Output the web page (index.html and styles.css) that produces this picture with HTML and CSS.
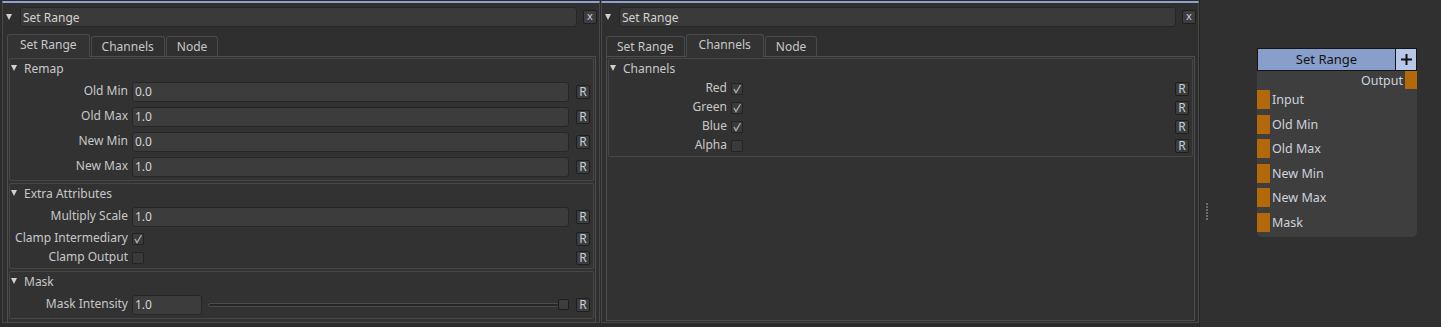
FILE: index.html
```html
<!DOCTYPE html>
<html lang="en">
<head>
  <meta charset="UTF-8">
  <title>Set Range</title>
  <link rel="stylesheet" href="styles.css">
</head>
<body>
  <div class="dock">
    <div class="frame">
      <div class="title-row">
        <span class="caret"></span>
        <div class="title-field">Set Range</div>
        <span class="close">x</span>
      </div>
      <div class="tabs">
        <span class="tab active">Set Range</span>
        <span class="tab">Channels</span>
        <span class="tab">Node</span>
      </div>
      <div class="tab-body">
        <div class="group">
          <div class="group-head"><span class="caret"></span>Remap</div>
          <div class="row"><span class="lbl">Old Min</span><div class="field">0.0</div><span class="r">R</span></div>
          <div class="row"><span class="lbl">Old Max</span><div class="field">1.0</div><span class="r">R</span></div>
          <div class="row"><span class="lbl">New Min</span><div class="field">0.0</div><span class="r">R</span></div>
          <div class="row"><span class="lbl">New Max</span><div class="field">1.0</div><span class="r">R</span></div>
        </div>
        <div class="group">
          <div class="group-head"><span class="caret"></span>Extra Attributes</div>
          <div class="row"><span class="lbl">Multiply Scale</span><div class="field">1.0</div><span class="r">R</span></div>
          <div class="row cb">
            <span class="lbl">Clamp Intermediary</span>
            <span class="check"><svg width="10" height="10" viewBox="0 0 10 10"><path d="M2 5 L4 8.5 L8.5 1" fill="none" stroke="#a8a8a8" stroke-width="1.4"/></svg></span>
            <span class="fill"></span><span class="r">R</span>
          </div>
          <div class="row cb">
            <span class="lbl">Clamp Output</span>
            <span class="check"></span>
            <span class="fill"></span><span class="r">R</span>
          </div>
        </div>
        <div class="group">
          <div class="group-head"><span class="caret"></span>Mask</div>
          <div class="row">
            <span class="lbl">Mask Intensity</span>
            <div class="field short">1.0</div>
            <div class="slider"><span class="track"></span><span class="handle"></span></div>
            <span class="r">R</span>
          </div>
        </div>
      </div>
    </div>
  </div>

  <div class="dock second">
    <div class="frame">
      <div class="title-row">
        <span class="caret"></span>
        <div class="title-field">Set Range</div>
        <span class="close">x</span>
      </div>
      <div class="tabs">
        <span class="tab">Set Range</span>
        <span class="tab active">Channels</span>
        <span class="tab">Node</span>
      </div>
      <div class="tab-body">
        <div class="group">
          <div class="group-head"><span class="caret"></span>Channels</div>
          <div class="row cb">
            <span class="lbl">Red</span>
            <span class="check"><svg width="10" height="10" viewBox="0 0 10 10"><path d="M2 5 L4 8.5 L8.5 1" fill="none" stroke="#a8a8a8" stroke-width="1.4"/></svg></span>
            <span class="fill"></span><span class="r">R</span>
          </div>
          <div class="row cb">
            <span class="lbl">Green</span>
            <span class="check"><svg width="10" height="10" viewBox="0 0 10 10"><path d="M2 5 L4 8.5 L8.5 1" fill="none" stroke="#a8a8a8" stroke-width="1.4"/></svg></span>
            <span class="fill"></span><span class="r">R</span>
          </div>
          <div class="row cb">
            <span class="lbl">Blue</span>
            <span class="check"><svg width="10" height="10" viewBox="0 0 10 10"><path d="M2 5 L4 8.5 L8.5 1" fill="none" stroke="#a8a8a8" stroke-width="1.4"/></svg></span>
            <span class="fill"></span><span class="r">R</span>
          </div>
          <div class="row cb">
            <span class="lbl">Alpha</span>
            <span class="check"></span>
            <span class="fill"></span><span class="r">R</span>
          </div>
        </div>
      </div>
    </div>
  </div>

  <div class="graph">
    <span class="grip"></span>
    <div class="node">
      <div class="node-head">
        <span class="node-name">Set Range</span>
        <span class="node-add"><svg width="11" height="11" viewBox="0 0 11 11"><path d="M5.5 0 V11 M0 5.5 H11" stroke="#111" stroke-width="2"/></svg></span>
      </div>
      <div class="node-body">
        <div class="out-row"><span>Output</span><i class="port"></i></div>
        <div class="in-rows">
          <div class="in-row"><i class="port"></i><span>Input</span></div>
          <div class="in-row"><i class="port"></i><span>Old Min</span></div>
          <div class="in-row"><i class="port"></i><span>Old Max</span></div>
          <div class="in-row"><i class="port"></i><span>New Min</span></div>
          <div class="in-row"><i class="port"></i><span>New Max</span></div>
          <div class="in-row"><i class="port"></i><span>Mask</span></div>
        </div>
      </div>
    </div>
  </div>
</body>
</html>
```

FILE: styles.css
```css
* {
  box-sizing: border-box;
}
body {
  margin: 0;
  height: 327px;
  display: flex;
  background: #2b2b2b;
  font-family: "Noto Sans", "DejaVu Sans", sans-serif;
  font-size: 12px;
  color: #c8c8c8;
  overflow: hidden;
}
.dock {
  width: 600px;
  padding: 1px 0 0 2px;
}
.dock.second {
  width: 599px;
  padding-left: 1px;
}
.frame {
  height: 322px;
  display: flex;
  flex-direction: column;
  background: #2f2f2f;
  border: 1px solid #474747;
  border-top: 2px solid #8ea2cf;
}
.caret {
  width: 0;
  height: 0;
  border-left: 3px solid transparent;
  border-right: 3px solid transparent;
  border-top: 6px solid #d0d0d0;
  margin-right: 8px;
}
.title-row {
  display: flex;
  align-items: center;
  height: 20px;
  margin-top: 4px;
  padding: 0 2px 0 3px;
}
.title-field {
  flex: 1;
  height: 20px;
  background: #3a3a3a;
  border: 1px solid #262626;
  border-radius: 3px;
  padding-left: 2px;
  line-height: 19px;
  color: #d2d2d2;
}
.close {
  width: 14px;
  height: 14px;
  margin-left: 6px;
  background: #3d3d3d;
  border: 1px solid #1e1e1e;
  border-radius: 2px;
  text-align: center;
  font-size: 11px;
  line-height: 10px;
  color: #c4cfe0;
}
.tabs {
  display: flex;
  align-items: flex-end;
  height: 22px;
  margin-top: 7px;
  padding-left: 4px;
}
.tab {
  height: 20px;
  padding: 0 10px;
  margin-right: 1px;
  background: #303030;
  border: 1px solid #4a4a4a;
  border-bottom: none;
  border-radius: 3px 3px 0 0;
  line-height: 19px;
}
.tab.active {
  position: relative;
  z-index: 1;
  height: 23px;
  margin-bottom: -1px;
  padding: 0 12px;
  background: #333333;
}
.tab-body {
  flex: 1;
  margin: 0 3px 1px 4px;
  padding: 1px;
  background: #323232;
  border: 1px solid #4d4d4d;
}
.group {
  border: 1px solid #464646;
  border-radius: 2px;
  padding-bottom: 1px;
  margin-bottom: 2px;
}
.group-head {
  display: flex;
  align-items: center;
  height: 20px;
  padding: 0 0 2px 1px;
}
.group-head .caret {
  margin-right: 7px;
}
.row {
  display: flex;
  align-items: center;
  height: 25px;
}
.row.cb {
  height: 19px;
}
.lbl {
  width: 118px;
  margin-right: 4px;
  padding-bottom: 2px;
  text-align: right;
  white-space: nowrap;
}
.field {
  flex: 1;
  height: 20px;
  background: #3c3c3c;
  border: 1px solid #262626;
  border-radius: 3px;
  padding-left: 2px;
  line-height: 17px;
  color: #d4d4d4;
}
.field.short {
  flex: none;
  width: 70px;
}
.fill {
  flex: 1;
}
.check {
  width: 12px;
  height: 12px;
  display: flex;
  align-items: center;
  justify-content: center;
  background: #3a3a3a;
  border: 1px solid #232323;
  border-radius: 1px;
}
.r {
  width: 14px;
  height: 14px;
  margin: 0 3px 0 7px;
  background: #3d3d3d;
  border: 1px solid #1e1e1e;
  border-radius: 2px;
  text-align: center;
  font-size: 12px;
  line-height: 12px;
  color: #c2cfdc;
}
.slider {
  flex: 1;
  display: flex;
  align-items: center;
  margin-left: 6px;
}
.track {
  flex: 1;
  height: 4px;
  background: #262626;
  border: 1px solid #4c4c4c;
  border-radius: 2px;
}
.handle {
  width: 11px;
  height: 11px;
  margin-left: -1px;
  background: #3e3e3e;
  border: 1px solid #1d1d1d;
  border-radius: 2px;
}
.graph {
  flex: 1;
  position: relative;
  background: #303030;
  border-left: 1px solid #252525;
}
.grip {
  position: absolute;
  left: 6px;
  top: 203px;
  width: 2px;
  height: 18px;
  background: repeating-linear-gradient(to bottom, #6c6c6c 0 2px, transparent 2px 3px);
}
.node {
  position: absolute;
  left: 57px;
  top: 48px;
  width: 160px;
}
.node-head {
  display: flex;
  height: 23px;
  background: #889fcb;
  border: 1px solid #141414;
  color: #121212;
}
.node-name {
  flex: 1;
  text-align: center;
  font-size: 13px;
  line-height: 21px;
}
.node-add {
  width: 21px;
  display: flex;
  align-items: center;
  justify-content: center;
  background: #b6c7e8;
  border-left: 1px solid #141414;
}
.node-body {
  height: 166px;
  background: #3e3e3e;
  border-radius: 0 0 5px 5px;
  color: #ccd4dc;
  font-size: 12.5px;
}
.port {
  display: block;
  background: #b36909;
}
.out-row {
  display: flex;
  justify-content: flex-end;
  align-items: center;
  height: 18px;
}
.out-row .port {
  width: 12px;
  height: 18px;
  margin-left: 2px;
}
.in-rows {
  display: flex;
  flex-direction: column;
  gap: 5.6px;
  margin-top: 1px;
}
.in-row {
  display: flex;
  align-items: center;
  height: 19px;
}
.in-row .port {
  width: 13px;
  height: 19px;
  margin-right: 2px;
}
```
